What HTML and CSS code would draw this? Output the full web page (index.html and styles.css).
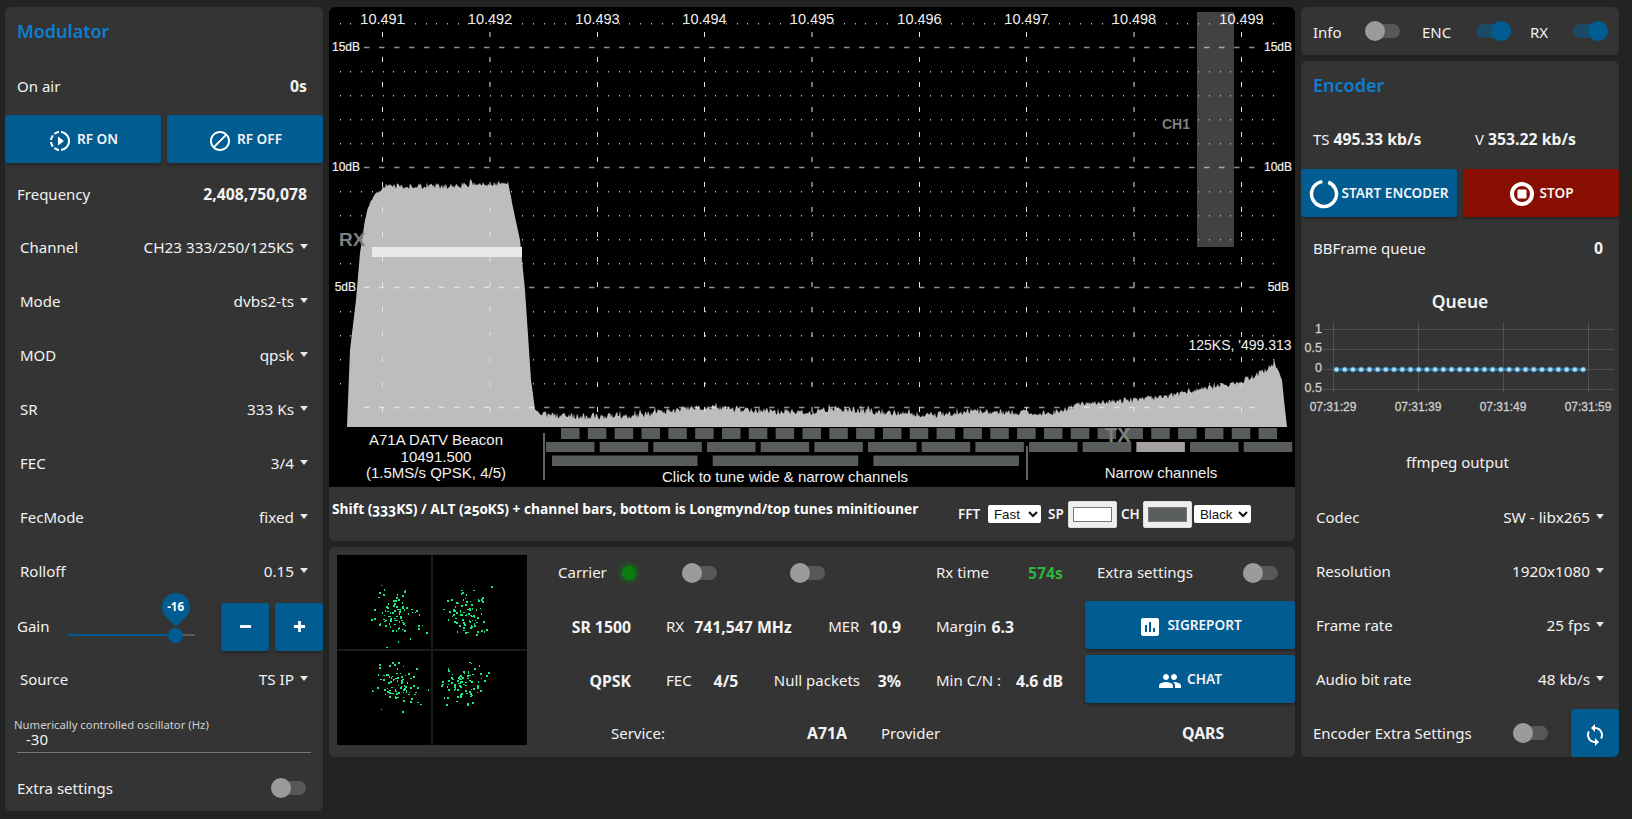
FILE: index.html
```html
<!DOCTYPE html>
<html lang="en">
<head>
<meta charset="utf-8">
<title>DATV Modulator</title>
<link rel="stylesheet" href="styles.css">
</head>
<body>
<div class="app">

  <aside class="panel side">
    <h2 class="title">Modulator</h2>
    <div class="row"><span>On air</span><b>0s</b></div>
    <div class="btn-row">
      <button class="btn"><svg class="ico" viewBox="0 0 24 24"><path d="M13.05 9.79L10 7.5v9l3.05-2.29L16 12zM11 4.07V2.05c-2.01.2-3.84 1-5.32 2.21L7.1 5.69c1.11-.86 2.44-1.44 3.9-1.62zM5.69 7.1L4.26 5.68C3.05 7.16 2.25 8.99 2.05 11h2.02c.18-1.46.76-2.79 1.62-3.9zM4.07 13H2.05c.2 2.01 1 3.84 2.21 5.32l1.43-1.43c-.86-1.1-1.44-2.43-1.62-3.89zm1.61 6.74C7.16 20.95 9 21.75 11 21.95v-2.02c-1.46-.18-2.79-.76-3.9-1.62l-1.42 1.43zM22 12c0 5.16-3.92 9.42-8.95 9.95v-2.02C16.97 19.41 20 16.05 20 12s-3.03-7.41-6.95-7.93V2.05C18.08 2.58 22 6.84 22 12z"/></svg>RF ON</button>
      <button class="btn"><svg class="ico" viewBox="0 0 24 24"><path d="M12 2C6.48 2 2 6.48 2 12s4.48 10 10 10 10-4.48 10-10S17.52 2 12 2zM4 12c0-4.42 3.58-8 8-8 1.85 0 3.55.63 4.9 1.69L5.69 16.9C4.63 15.55 4 13.85 4 12zm8 8c-1.85 0-3.55-.63-4.9-1.69L18.31 7.1C19.37 8.45 20 10.15 20 12c0 4.42-3.58 8-8 8z"/></svg>RF OFF</button>
    </div>
    <div class="row"><span>Frequency</span><b>2,408,750,078</b></div>
    <div class="row sel"><span>Channel</span><span class="val">CH23 333/250/125KS<i class="caret"></i></span></div>
    <div class="row sel"><span>Mode</span><span class="val">dvbs2-ts<i class="caret"></i></span></div>
    <div class="row sel"><span>MOD</span><span class="val">qpsk<i class="caret"></i></span></div>
    <div class="row sel"><span>SR</span><span class="val">333 Ks<i class="caret"></i></span></div>
    <div class="row sel"><span>FEC</span><span class="val">3/4<i class="caret"></i></span></div>
    <div class="row sel"><span>FecMode</span><span class="val">fixed<i class="caret"></i></span></div>
    <div class="row sel"><span>Rolloff</span><span class="val">0.15<i class="caret"></i></span></div>
    <div class="gain-row">
      <span class="gain-label">Gain</span>
      <div class="slider">
        <div class="slider-fill"></div>
        <div class="slider-thumb"></div>
        <div class="slider-pin"></div>
        <div class="slider-value">-16</div>
      </div>
      <button class="btn square"><svg class="ico-sm" viewBox="0 0 14 14"><rect x="1" y="5.5" width="12" height="3"/></svg></button>
      <button class="btn square"><svg class="ico-sm" viewBox="0 0 14 14"><path d="M1 5.5h4.5V1h3v4.5H13v3H8.500V13h-3V8.500H1z"/></svg></button>
    </div>
    <div class="row sel"><span>Source</span><span class="val">TS IP<i class="caret"></i></span></div>
    <div class="nco">
      <div class="nco-label">Numerically controlled oscillator (Hz)</div>
      <div class="nco-value">-30</div>
    </div>
    <div class="row last"><span>Extra settings</span><i class="toggle"></i></div>
  </aside>

  <main class="center">
    <section class="panel scope">
      <svg id="spectrum" class="spectrum" viewBox="329 7 966 480" width="966" height="480">
        <g id="spec-fill"></g>
        <rect x="372" y="247" width="150" height="10" class="rx-bar"/>
        <rect x="1197" y="12" width="37" height="235" class="ch-bar"/>
        <g id="spec-grid"></g>
        <g id="spec-chan"></g>
        <g class="t-freq">
          <text x="382.500" y="24">10.491</text><text x="490" y="24">10.492</text><text x="597.500" y="24">10.493</text>
          <text x="704.500" y="24">10.494</text><text x="812" y="24">10.495</text><text x="919.500" y="24">10.496</text>
          <text x="1026.500" y="24">10.497</text><text x="1134" y="24">10.498</text><text x="1241.500" y="24">10.499</text>
        </g>
        <g class="t-db">
          <text x="360" y="51">15dB</text><text x="360" y="171">10dB</text><text x="356" y="291">5dB</text>
          <text x="1292" y="51">15dB</text><text x="1292" y="171">10dB</text><text x="1289" y="291">5dB</text>
        </g>
        <text x="339" y="246" class="t-rx">RX</text>
        <text x="1162" y="129" class="t-ch">CH1</text>
        <text x="1105" y="442" class="t-tx">TX</text>
        <g class="t-info">
          <text x="436" y="445">A71A DATV Beacon</text>
          <text x="436" y="462">10491.500</text>
          <text x="436" y="478">(1.5MS/s QPSK, 4/5)</text>
          <text x="785" y="482">Click to tune wide &amp; narrow channels</text>
          <text x="1161" y="478">Narrow channels</text>
          <text x="1240" y="350" class="t-rate">125KS, '499.313</text>
        </g>
        <rect x="543.500" y="433" width="1" height="47" class="sep"/>
        <rect x="1026.500" y="446" width="1" height="34" class="sep"/>
      </svg>
      <div class="scope-foot">
        <span class="hint">Shift (333KS) / ALT (250KS) + channel bars, bottom is Longmynd/top tunes minitiouner</span>
        <label class="f-lbl f-fft">FFT</label>
        <select class="f-sel f-sel-a"><option>Fast</option></select>
        <label class="f-lbl f-sp">SP</label>
        <input type="color" class="f-col" value="#ffffff">
        <label class="f-lbl f-ch">CH</label>
        <input type="color" class="f-col" value="#5a5e5e">
        <select class="f-sel f-sel-b"><option>Black</option></select>
      </div>
    </section>

    <section class="panel rx">
      <svg id="constellation" class="constellation" viewBox="337 555 190 190" width="190" height="190">
        <rect x="337" y="555" width="190" height="190" fill="#000"/>
        <rect x="431" y="555" width="2" height="190" fill="#1c1c1c"/>
        <rect x="337" y="649" width="190" height="2" fill="#1c1c1c"/>
        <g id="dots"></g>
      </svg>
      <div class="rx-grid">
        <div class="cell c-carrier"><span>Carrier</span><i class="led"></i></div>
        <div class="cell c-t1"><i class="toggle"></i></div>
        <div class="cell c-t2"><i class="toggle"></i></div>
        <div class="cell c-d between"><span>Rx time</span><b class="green">574s</b></div>
        <div class="cell c-e between"><span>Extra settings</span><i class="toggle"></i></div>

        <div class="cell c-a"><b>SR 1500</b></div>
        <div class="cell c-b gap-rx"><span>RX</span><b>741,547 MHz</b></div>
        <div class="cell c-c"><span>MER</span><b class="num">10.9</b></div>
        <div class="cell c-d"><span>Margin</span><b class="m5">6.3</b></div>
        <div class="cell c-btn"><button class="btn wide"><svg class="ico" viewBox="0 0 24 24"><path d="M19 3H5c-1.100 0-2 .9-2 2v14c0 1.100.9 2 2 2h14c1.100 0 2-.9 2-2V5c0-1.100-.9-2-2-2zM9 17H7v-7h2v7zm4 0h-2V7h2v10zm4 0h-2v-4h2v4z"/></svg>SIGREPORT</button></div>

        <div class="cell c-a"><b>QPSK</b></div>
        <div class="cell c-b gap-fec"><span>FEC</span><b>4/5</b></div>
        <div class="cell c-c"><span>Null packets</span><b class="num">3%</b></div>
        <div class="cell c-d between"><span>Min C/N :</span><b>4.6 dB</b></div>
        <div class="cell c-btn"><button class="btn wide"><svg class="ico" viewBox="0 0 24 24"><path d="M16 11c1.660 0 2.990-1.340 2.990-3S17.660 5 16 5c-1.660 0-3 1.340-3 3s1.340 3 3 3zm-8 0c1.660 0 2.990-1.340 2.990-3S9.660 5 8 5C6.340 5 5 6.340 5 8s1.340 3 3 3zm0 2c-2.330 0-7 1.170-7 3.500V19h14v-2.500c0-2.330-4.670-3.500-7-3.500zm8 0c-.29 0-.62.02-.97.05 1.160.84 1.970 1.970 1.970 3.450V19h6v-2.500c0-2.330-4.670-3.500-7-3.500z"/></svg>CHAT</button></div>

        <div class="service">
          <span class="s-a">Service:</span>
          <b class="s-b">A71A</b>
          <span class="s-c">Provider</span>
          <b class="s-d">QARS</b>
        </div>
      </div>
    </section>
  </main>

  <aside class="right">
    <section class="panel info">
      <div class="info-cell c1"><span>Info</span><i class="toggle"></i></div>
      <div class="info-cell c2"><span>ENC</span><i class="toggle on"></i></div>
      <div class="info-cell c3"><span>RX</span><i class="toggle on"></i></div>
    </section>
    <section class="panel encoder">
      <h2 class="title">Encoder</h2>
      <div class="rates"><span class="rate-a">TS <b>495.33 kb/s</b></span><span>V <b>353.22 kb/s</b></span></div>
      <div class="btn-row">
        <button class="btn tight"><svg class="ico-lg" viewBox="0 0 30 30"><circle cx="15" cy="15" r="12.500" class="ring"/></svg>START ENCODER</button>
        <button class="btn stop"><svg class="ico-stop" viewBox="0 0 26 26"><path fill-rule="evenodd" d="M13 1a12 12 0 1 0 0 24a12 12 0 1 0 0-24zM13 5a8 8 0 1 1 0 16a8 8 0 1 1 0-16z"/><rect x="8.500" y="8.500" width="9" height="9" rx="1"/></svg>STOP</button>
      </div>
      <div class="row"><span>BBFrame queue</span><b>0</b></div>
      <div class="queue">
        <div class="queue-title">Queue</div>
        <svg id="chart" class="chart" viewBox="1301 321 318 100" width="318" height="100">
          <g class="c-y">
            <text x="1322" y="333">1</text><text x="1322" y="352">0.5</text><text x="1322" y="372">0</text><text x="1322" y="392">0.5</text>
          </g>
          <g class="c-x">
            <text x="1333" y="411">07:31:29</text><text x="1418" y="411">07:31:39</text><text x="1503" y="411">07:31:49</text><text x="1588" y="411">07:31:59</text>
          </g>
          <g id="chart-grid"></g>
          <g id="chart-line"></g>
        </svg>
      </div>
      <div class="ffmpeg">ffmpeg output</div>
      <div class="row sel"><span>Codec</span><span class="val">SW - libx265<i class="caret"></i></span></div>
      <div class="row sel"><span>Resolution</span><span class="val">1920x1080<i class="caret"></i></span></div>
      <div class="row sel"><span>Frame rate</span><span class="val">25 fps<i class="caret"></i></span></div>
      <div class="row sel"><span>Audio bit rate</span><span class="val">48 kb/s<i class="caret"></i></span></div>
      <div class="enc-extra">
        <span class="enc-label">Encoder Extra Settings</span>
        <i class="toggle"></i>
        <button class="btn square"><svg class="ico" viewBox="0 0 24 24"><path d="M12 4V1L8 5l4 4V6c3.310 0 6 2.690 6 6 0 1.010-.25 1.970-.7 2.800l1.460 1.460C19.540 15.030 20 13.570 20 12c0-4.420-3.580-8-8-8zm0 14c-3.310 0-6-2.690-6-6 0-1.010.25-1.970.7-2.800L5.240 7.740C4.460 8.970 4 10.430 4 12c0 4.420 3.580 8 8 8v3l4-4-4-4v3z"/></svg></button>
      </div>
    </section>
  </aside>
</div>
<script src="app.js"></script>
</body>
</html>
```

FILE: styles.css
```css
* { box-sizing: border-box; }
html, body { margin: 0; height: 100%; }
body {
  background: #222423;
  color: #f2f2f2;
  font-family: "Noto Sans", "Open Sans", sans-serif;
  font-size: 15px;
  overflow: hidden;
}
b { font-weight: 700; font-size: 15.800px; }
i { display: block; }

.app { display: flex; gap: 6px; padding: 7px 13px 0 5px; align-items: flex-start; }
.panel { background: #343434; border-radius: 6px; overflow: hidden; }

.side { width: 318px; height: 804px; }
.title {
  margin: 0; height: 53px; padding: 0 12px 6px;
  display: flex; align-items: center;
  font-size: 18px; font-weight: 600; color: #0d7ed0;
}
.row {
  height: 54px; display: flex; align-items: center; justify-content: space-between;
  padding: 0 16px 2px 12px;
}
.row.sel { padding: 0 15px; }
.side .row.sel { margin-top: -2px; margin-bottom: 2px; }
.row.last { height: 49px; padding: 3px 17px 0 12px; }
.val { display: flex; align-items: center; font-size: 15.300px; }
.caret {
  width: 0; height: 0; margin-left: 6px; margin-top: -1px;
  border-left: 4.500px solid transparent; border-right: 4.500px solid transparent;
  border-top: 5px solid #e8e8e8;
}

.btn-row { height: 54px; display: flex; gap: 6px; align-items: flex-start; padding-top: 1px; }
.btn {
  flex: 1; height: 48px; border: 0; padding: 0 0 2px; border-radius: 3px;
  background: #015c91; color: #f4f4f4;
  font: 600 13.600px "Noto Sans", sans-serif;
  display: flex; align-items: center; justify-content: center; gap: 5px;
  box-shadow: 0 2px 3px rgba(0,0,0,.3);
}
.btn.stop { background: #890e02; }
.btn.tight { gap: 2px; }
.btn.square { flex: 0 0 48px; }
.btn.wide { width: 100%; flex: none; }
.ico { width: 24px; height: 24px; fill: #fff; margin-top: 6px; }
.ico-sm { width: 13px; height: 13px; fill: #fff; }
.ico-lg { width: 30px; height: 30px; margin-top: 4px; }
.ico-stop { width: 26px; height: 26px; fill: #fff; margin-top: 4px; }
.ring { fill: none; stroke: #fff; stroke-width: 3.500; stroke-dasharray: 72 6.500; transform: rotate(-70deg); transform-origin: 15px 15px; }

.gain-row { height: 54px; display: flex; align-items: center; padding-left: 12px; gap: 6px; }
.gain-label { width: 40px; margin-right: 6px; padding-bottom: 2px; }
.slider { position: relative; width: 132px; height: 2px; background: #5a5a5a; margin: 16px 20px 0 0; }
.slider-fill { width: 108px; height: 2px; background: #015c91; }
.slider-thumb { position: absolute; left: 100.500px; top: -6.500px; width: 15px; height: 15px; border-radius: 50%; background: #015c91; }
.slider-pin {
  position: absolute; left: 94px; top: -41px; width: 28px; height: 28px;
  background: #015c91; border-radius: 50% 50% 0 50%; transform: rotate(45deg);
}
.slider-value { position: absolute; left: 94px; top: -41px; width: 28px; line-height: 28px; text-align: center; font-size: 11.500px; font-weight: 700; color: #fff; }

.nco { margin: 0 12px 9px; height: 45px; border-bottom: 1px solid #777; padding-top: 10px; }
.nco-label { margin-left: -3px; font-size: 11.300px; line-height: 14px; color: #d0d0d0; white-space: nowrap; }
.nco-value { padding-left: 9px; line-height: 14px; }

.toggle { position: relative; width: 35px; height: 14px; border-radius: 7px; background: #585858; flex: none; }
.toggle::after { content: ""; position: absolute; left: 0; top: -3px; width: 20px; height: 20px; border-radius: 50%; background: #9b9b9b; }
.toggle.on { background: #1c4a66; }
.toggle.on::after { left: 15px; background: #015c91; }

.center { width: 966px; display: flex; flex-direction: column; gap: 6px; }
.scope { height: 534px; }
.spectrum { display: block; background: #000; }
#spec-fill path { fill: #bdbdbd; }
.rx-bar { fill: #e9e9e9; }
.ch-bar { fill: #424242; }
.sep { fill: #c8c8c8; }
.t-freq text { font: 14.500px "Liberation Sans", sans-serif; fill: #f0f0f0; text-anchor: middle; }
.t-db text { font: 12px "Liberation Sans", sans-serif; fill: #f0f0f0; text-anchor: end; stroke: #f0f0f0; stroke-width: .2px; }
.t-rx { font: 700 19px "Liberation Sans", sans-serif; fill: #7e7e7e; }
.t-ch { font: 700 14px "Liberation Sans", sans-serif; fill: #7e7e7e; }
.t-tx { font: 700 20px "Liberation Sans", sans-serif; fill: #7e7e7e; }
.t-info text { font: 15px "Liberation Sans", sans-serif; fill: #f0f0f0; text-anchor: middle; }
.t-info .t-rate { font-size: 14px; }

.scope-foot { height: 54px; display: flex; align-items: center; padding-left: 3px; }
.hint {
  width: 626px; margin-bottom: 11px; white-space: nowrap;
  font: 700 13.750px "Open Sans", "Noto Sans", sans-serif; font-variant-numeric: oldstyle-nums; color: #fff;
}
.f-lbl { font-size: 13.500px; font-weight: 600; }
.f-fft { width: 30px; }
.f-sp { width: 20px; margin-left: 7px; }
.f-ch { width: 22px; margin-left: 4px; }
.f-col { width: 49px; height: 27px; padding: 5px 4px; border: 1px solid #ddd; background: #efefef; border-radius: 2px; margin: 0; }
.f-col::-webkit-color-swatch-wrapper { padding: 0; }
.f-col::-webkit-color-swatch { border: 1px solid #777; border-radius: 0; }
.f-sel { height: 18px; margin: 0; border: 0; border-radius: 2px; background: #fff; color: #111; font: 13.300px "Liberation Sans", sans-serif; color-scheme: light; padding: 0 0 0 2px; }
.f-sel-a { width: 53px; }
.f-sel-b { width: 57px; margin-left: 2px; }

.rx { height: 210px; display: flex; padding: 8px 0 0 8px; }
.constellation { flex: none; display: block; }
.rx-grid {
  margin-left: 13px; width: 755px; margin-top: -8px;
  display: grid; grid-template-columns: 126px 104px 166px 149px 210px; grid-template-rows: 54px 54px 54px 48px;
}
.cell { display: flex; align-items: center; white-space: nowrap; padding-bottom: 3px; }
.cell > span { margin-bottom: 2px; }
.between { justify-content: space-between; }
.c-carrier { padding-left: 18px; justify-content: space-between; padding-right: 30px; }
.led { width: 14px; height: 14px; border-radius: 50%; background: #0a7c10; box-shadow: 0 0 6px 1px #0d7a12; }
.c-t1 { padding-left: 16px; }
.c-t2 { padding-left: 20px; }
.c-a { justify-content: flex-end; padding-right: 35px; }
.gap-rx { gap: 10px; }
.gap-fec { gap: 22px; }
.c-c { justify-content: flex-end; padding-right: 35px; }
.num { margin-left: 10px; min-width: 31px; text-align: right; }
.m5 { margin-left: 5px; }
.c-d { padding-right: 22px; }
.c-e { padding: 0 17px 3px 12px; }
.c-btn { align-items: flex-start; padding-bottom: 0; }
.green { color: #2fb33f; }
.service { grid-column: 1 / -1; display: flex; align-items: center; }
.s-a { width: 125px; text-align: right; }
.s-b { width: 182px; text-align: right; }
.s-c { margin-left: 34px; width: 301px; }
.s-d { width: 60px; }

.right { width: 318px; display: flex; flex-direction: column; gap: 6px; }
.info { height: 48px; display: flex; align-items: center; padding-left: 12px; }
.info-cell { display: flex; align-items: center; justify-content: space-between; }
.info-cell span { margin-top: 2px; }
.info-cell.c1 { width: 87px; margin-right: 22px; }
.info-cell.c2 { width: 89px; margin-right: 19px; }
.info-cell.c3 { width: 78px; }

.encoder { height: 696px; }
.rates { height: 54px; display: flex; align-items: center; padding: 0 0 4px 12px; }
.rate-a { width: 162px; }
.queue { height: 160px; }
.queue-title { height: 45px; padding-top: 5px; display: flex; align-items: center; justify-content: center; font-size: 17.500px; font-weight: 600; }
.chart { display: block; }
.c-y text { font: 12.500px "Liberation Sans", sans-serif; fill: #cfcfcf; text-anchor: end; stroke: #cfcfcf; stroke-width: .3px; }
.c-x text { font: 12px "Liberation Sans", sans-serif; fill: #cfcfcf; text-anchor: middle; stroke: #cfcfcf; stroke-width: .3px; }
.ffmpeg { height: 54px; display: flex; align-items: center; justify-content: center; padding: 0 5px 2px 0; }
.enc-extra { height: 51px; display: flex; align-items: flex-end; padding-left: 12px; }
.enc-label { width: 200px; line-height: 48px; padding-top: 4px; }
.enc-extra .toggle { margin: 0 23px 17px 0; }
```

FILE: app.js
```js
(function () {
  var NS = 'http://www.w3.org/2000/svg';
  var seed = 20240;
  function rnd() { seed = (seed * 16807) % 2147483647; return seed / 2147483647; }
  function gauss() { return (rnd() + rnd() + rnd() + rnd() - 2) * 1.1; }
  function add(parent, tag, attrs) {
    var el = document.createElementNS(NS, tag);
    for (var k in attrs) el.setAttribute(k, attrs[k]);
    parent.appendChild(el);
    return el;
  }

  /* spectrum outline: x, y, noise amplitude */
  var keys = [
    [347, 427, 0], [350, 350, 0], [356, 300, 0], [360, 253, 0], [365, 220, .5], [368, 208, 1], [373, 197, 1.5],
    [380, 190, 2.5], [395, 186, 3], [420, 186, 3], [450, 186, 3], [480, 184, 3], [508, 184, 2], [511, 197, 1],
    [515, 217, 0], [520, 240, 0], [522, 260, 0], [525, 290, 0], [531, 380, 0], [535, 410, 1], [542, 414, 3],
    [590, 417, 3.500], [640, 415, 3.500], [690, 408, 3.500], [720, 408, 3.500], [760, 411, 3.500], [810, 412, 3.500],
    [835, 408, 3.500], [880, 412, 3.500], [935, 415, 3], [970, 411, 3.500], [1050, 413, 3], [1085, 403, 3],
    [1135, 400, 3], [1170, 396, 3], [1200, 388, 3], [1235, 384, 3], [1250, 378, 3.500], [1265, 370, 3.500],
    [1274, 364, 3], [1279, 372, 1], [1282, 380, 0], [1284, 400, 0], [1287, 427, 0]
  ];
  var d = 'M347 427';
  var k = 0;
  for (var x = 347; x <= 1287; x++) {
    while (k < keys.length - 2 && x > keys[k + 1][0]) k++;
    var a = keys[k], b = keys[k + 1], t = (x - a[0]) / (b[0] - a[0]);
    var y = a[1] + (b[1] - a[1]) * t;
    var amp = a[2] + (b[2] - a[2]) * t;
    d += 'L' + x + ' ' + (y + (rnd() - .5) * amp * 2 - (rnd() > .9 ? amp * .9 : 0)).toFixed(1);
  }
  add(document.getElementById('spec-fill'), 'path', { d: d + 'L1287 427Z' });

  /* grid */
  var grid = document.getElementById('spec-grid');
  var xs = [382.5, 490, 597.5, 704.5, 812, 919.5, 1026.5, 1134, 1241.5];
  var vert = '';
  xs.forEach(function (vx) {
    for (var vy = 32; vy <= 407; vy += 25) vert += 'M' + vx + ' ' + vy + 'v5';
  });
  add(grid, 'path', { d: vert, stroke: '#e4e4e4', 'stroke-width': 1, fill: 'none' });
  [47.5, 167.5, 287.5, 407.5].forEach(function (hy) {
    add(grid, 'path', {
      d: 'M364 ' + hy + 'H1255', stroke: 'rgba(255,255,255,.56)', 'stroke-width': 1.4,
      'stroke-dasharray': '5.500 9.500', fill: 'none'
    });
  });
  var dots = '';
  for (var dy = 23; dy <= 383; dy += 24) {
    if (dy === 47 || dy === 167 || dy === 287) continue;
    for (var dx = 339.7; dx <= 1276; dx += 10.73) dots += 'M' + Math.round(dx) + ' ' + dy + 'h1v1.500h-1z';
  }
  add(grid, 'path', { d: dots, fill: '#b8b8b8' });

  /* channel bars */
  var chan = document.getElementById('spec-chan');
  var i;
  for (i = 0; i < 27; i++) add(chan, 'rect', { x: 561 + i * 26.83, y: 428, width: 18.5, height: 11, fill: '#585c5c' });
  for (i = 0; i < 14; i++) add(chan, 'rect', { x: 546 + i * 53.67, y: 442, width: 48.5, height: 10, fill: i === 11 ? '#a5a0a0' : '#585c5c' });
  for (i = 0; i < 3; i++) add(chan, 'rect', { x: 552 + i * 160.7, y: 455.5, width: 145.5, height: 10.5, fill: '#585c5c' });

  /* constellation */
  var dotsG = document.getElementById('dots');
  [[397, 612], [467, 613], [398, 683], [463, 683]].forEach(function (c) {
    for (var n = 0; n < 85; n++) {
      var px = Math.round(c[0] + gauss() * 17);
      var py = Math.round(c[1] + gauss() * 18);
      add(dotsG, 'rect', { x: px, y: py, width: rnd() > .35 ? 2 : 1, height: rnd() > .35 ? 2 : 1, fill: '#1de983' });
    }
  });

  /* queue chart */
  var cg = document.getElementById('chart-grid');
  [329.5, 349.5, 369.5, 389.5].forEach(function (gy) {
    add(cg, 'path', { d: 'M1323 ' + gy + 'H1614', stroke: 'rgba(255,255,255,.14)', fill: 'none' });
  });
  [1333.5, 1418.5, 1503.5, 1588.5].forEach(function (gx) {
    add(cg, 'path', { d: 'M' + gx + ' 322V393', stroke: 'rgba(255,255,255,.14)', fill: 'none' });
  });
  var cl = document.getElementById('chart-line');
  add(cl, 'path', { d: 'M1336 369.5H1583', stroke: '#1f77b4', 'stroke-width': 2.5, fill: 'none' });
  for (i = 0; i < 31; i++) {
    add(cl, 'circle', { cx: 1336.5 + i * 8.22, cy: 369.5, r: 2.5, fill: '#bcd9ea', stroke: '#3a8fc0', 'stroke-width': 1 });
  }
})();
```
